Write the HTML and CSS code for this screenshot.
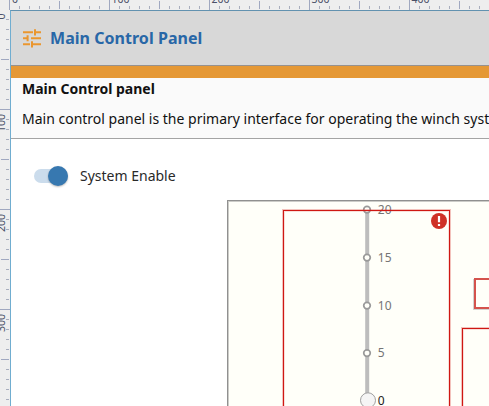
FILE: index.html
```
<!DOCTYPE html>
<html lang="en">
<head>
<meta charset="utf-8">
<title>Main Control Panel</title>
<link rel="stylesheet" href="styles.css">
</head>
<body>
<div class="editor">
  <svg class="ruler-top" width="489" height="10">
    <defs>
      <pattern id="tx" x="9" y="0" width="100" height="10" patternUnits="userSpaceOnUse">
        <path d="M.5 0V10M50.5 1V9" stroke="#a0a8c0"/>
        <path d="M10.5 6V9M20.5 6V9M30.5 6V9M40.5 6V9M60.5 6V9M70.5 6V9M80.5 6V9M90.5 6V9" stroke="#a8adbd"/>
      </pattern>
    </defs>
    <rect x="9" width="480" height="10" fill="url(#tx)"/>
    <g class="ruler-label">
      <text x="12" y="3">0</text><text x="111.5" y="3">100</text><text x="211.5" y="3">200</text><text x="311.5" y="3">300</text><text x="411.5" y="3">400</text>
    </g>
  </svg>
  <svg class="ruler-left" width="10" height="396">
    <defs>
      <pattern id="ty" x="0" y="-1" width="10" height="100" patternUnits="userSpaceOnUse">
        <path d="M0 .5H10M1 50.5H9" stroke="#a0a8c0"/>
        <path d="M6 10.5H9M6 20.5H9M6 30.5H9M6 40.5H9M6 60.5H9M6 70.5H9M6 80.5H9M6 90.5H9" stroke="#a8adbd"/>
      </pattern>
    </defs>
    <rect width="10" height="396" fill="url(#ty)"/>
    <g class="ruler-label" text-anchor="end">
      <text transform="translate(4.5 3.5) rotate(-90)">0</text><text transform="translate(4.5 104) rotate(-90)">100</text><text transform="translate(4.5 204) rotate(-90)">200</text><text transform="translate(4.5 304) rotate(-90)">300</text>
    </g>
  </svg>
  <main class="page">
    <header class="titlebar">
      <svg class="tune" width="20" height="20" viewBox="0 0 20 20" fill="none" stroke="#ea962f" stroke-width="2">
        <path d="M1 4.3H11M13 4.3H19M13 1.2V7.4M1 10.2H6M5.6 7.2V13.3M9 10.2H19M1 16.3H8M10 13.2V19.4M10 16.3H19"/>
      </svg>
      <h1>Main Control Panel</h1>
    </header>
    <section class="intro">
      <h2>Main Control panel</h2>
      <p>Main control panel is the primary interface for operating the winch system</p>
    </section>
    <div class="enable">
      <span class="switch"><span class="knob"></span></span>
      <span class="enable-label">System Enable</span>
    </div>
    <section class="canvas">
      <svg class="slider" width="50" height="205" viewBox="0 0 50 205">
        <path d="M11.2 8V200" stroke="#bdbdbd" stroke-width="4"/>
        <g fill="#fffff9" stroke="#9a9a9a" stroke-width="1.7">
          <circle cx="11" cy="8.6" r="3.3"/><circle cx="11" cy="56.6" r="3.3"/><circle cx="11" cy="104.6" r="3.3"/><circle cx="11" cy="152.1" r="3.3"/>
        </g>
        <circle cx="12" cy="199.3" r="7.5" fill="#f5f5f5" stroke="#a0a0a0"/>
        <g class="scale">
          <text x="21.8" y="12.5">20</text><text x="21.8" y="60.8">15</text><text x="21.8" y="108.8">10</text><text x="21.8" y="156.3">5</text><text class="current" x="21.8" y="204">0</text>
        </g>
      </svg>
      <div class="outline gauge">
        <svg class="alert" width="16" height="16" viewBox="0 0 16 16"><circle cx="8" cy="8" r="8" fill="#cf3127"/><path d="M8 3V9.2M8 11V13" stroke="#fff" stroke-width="2.2"/></svg>
      </div>
      <div class="outline field"></div>
      <div class="outline group"></div>
    </section>
  </main>
</div>
</body>
</html>
```
FILE: styles.css
```
* { box-sizing: border-box; }
body { margin: 0; width: 489px; height: 406px; overflow: hidden; font-family: "Noto Sans", sans-serif; background: #fff; }
h1, h2, p { margin: 0; white-space: nowrap; }
.editor { display: grid; grid-template-columns: 10px 479px; grid-template-rows: 10px 396px; background: #eee; }
.ruler-top { grid-column: 1 / 3; display: block; }
.ruler-left { display: block; }
.ruler-label { font-size: 10.5px; fill: #4a5168; }
.page { height: 396px; overflow: hidden; background: #fff; border-left: 1px solid #70add0; border-top: 1px solid #6292b0; }
.titlebar { height: 55px; display: flex; align-items: center; gap: 8px; padding-left: 11px; background: #d8d8d8; border-bottom: 1px solid #96918e; }
.tune { display: block; }
h1 { font-size: 16px; font-weight: 700; letter-spacing: 0.04px; color: #2867a7; line-height: 22px; }
.intro { height: 73px; border-top: 12px solid #e59835; border-bottom: 1px solid #a4a4a4; background: #fafafa; padding-left: 11px; color: #111; }
h2 { font-size: 14px; font-weight: 700; line-height: 20px; margin-top: 1px; }
p { font-size: 14px; line-height: 20px; margin-top: 10px; }
.enable { height: 61px; padding: 27px 0 0 23px; display: flex; align-items: flex-start; gap: 12px; }
.switch { width: 34px; height: 14px; margin-top: 3px; display: flex; align-items: center; justify-content: flex-end; background: #cbdcec; border-radius: 7px; }
.knob { width: 20px; height: 20px; flex: none; border-radius: 50%; background: #3778b0; box-shadow: 0 1px 2px #0004; }
.enable-label { font-size: 14px; line-height: 20px; color: #292929; }
.canvas { position: relative; margin-left: 216px; height: 210px; border: 1px solid #909090; border-width: 1px 0 0 1px; box-shadow: inset 1px 1px 0 #ccccc8; background: #fffff9; }
.slider { position: absolute; left: 128px; top: 0; overflow: visible; }
.scale { font-size: 12px; fill: #757575; }
.scale .current { fill: #222; }
.outline { position: absolute; border: 1px solid #cf1713; box-shadow: 0 0 0 1px #d41f1a45, inset 0 0 0 1px #d41f1a25; }
.gauge { left: 55px; top: 9px; width: 167px; height: 220px; }
.alert { position: absolute; right: 2px; top: 2px; }
.field { left: 246px; top: 77px; width: 30px; height: 31px; border: 2px solid #d4534d; box-shadow: -1px 1px 0 #aaa8; }
.group { left: 234px; top: 127px; width: 40px; height: 100px; }
```
